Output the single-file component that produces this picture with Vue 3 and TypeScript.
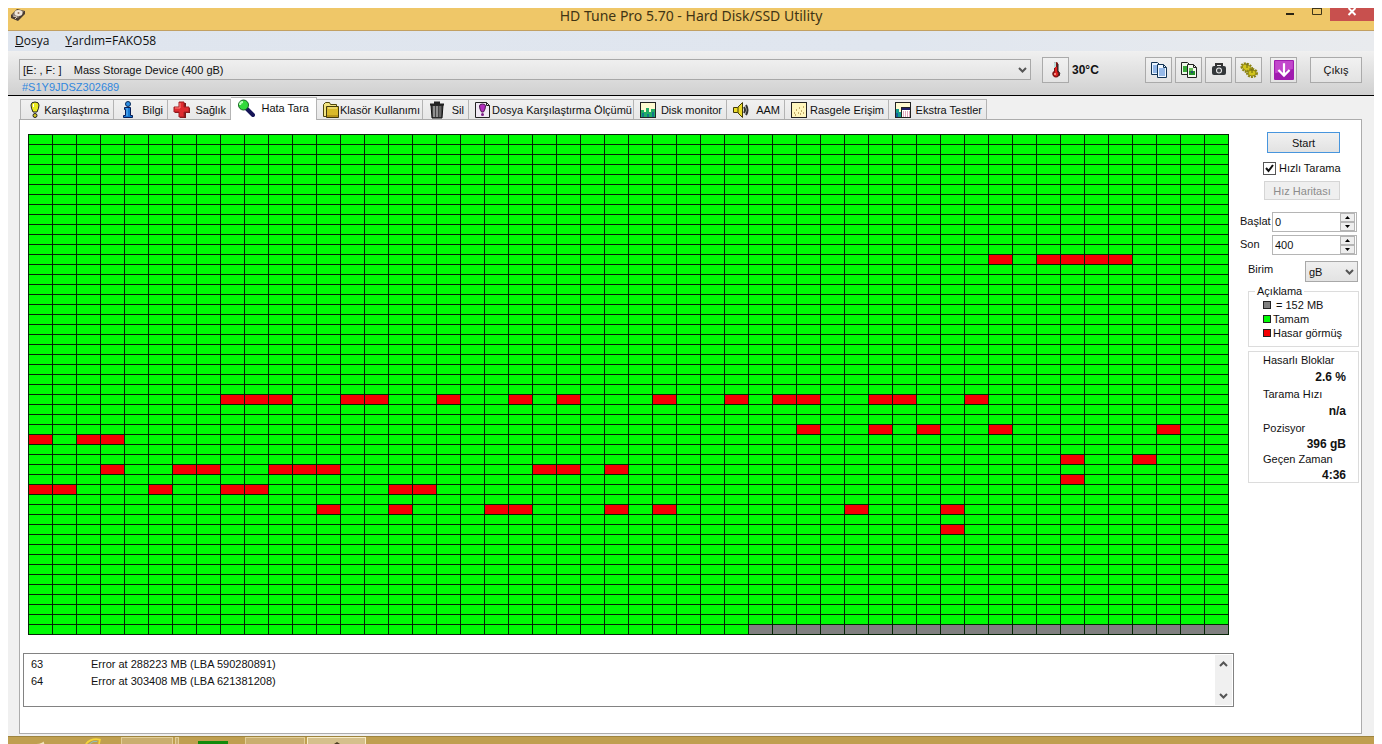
<script setup lang="ts">
import { ref } from 'vue'

type BlockState = 'ok' | 'bad' | 'unread'

const COLUMNS = 50
const ROWS = 50

const damaged: Record<number, number[]> = {
  12: [40, 42, 43, 44, 45],
  26: [8, 9, 10, 13, 14, 17, 20, 22, 26, 29, 31, 32, 35, 36, 39],
  29: [32, 35, 37, 40, 47],
  30: [0, 2, 3],
  32: [43, 46],
  33: [3, 6, 7, 10, 11, 12, 21, 22, 24],
  34: [43],
  35: [0, 1, 5, 8, 9, 15, 16],
  37: [12, 15, 19, 20, 24, 26, 34, 38],
  39: [38],
}
const scanned = 49 * COLUMNS + 30

const blocks: BlockState[] = Array.from({ length: ROWS * COLUMNS }, (_, i) => {
  if (i >= scanned) return 'unread'
  return damaged[Math.floor(i / COLUMNS)]?.includes(i % COLUMNS) ? 'bad' : 'ok'
})

const tabs = [
  { id: 'benchmark', label: 'Karşılaştırma' },
  { id: 'info', label: 'Bilgi' },
  { id: 'health', label: 'Sağlık' },
  { id: 'scan', label: 'Hata Tara' },
  { id: 'folder', label: 'Klasör Kullanımı' },
  { id: 'erase', label: 'Sil' },
  { id: 'file', label: 'Dosya Karşılaştırma Ölçümü' },
  { id: 'monitor', label: 'Disk monitor' },
  { id: 'aam', label: 'AAM' },
  { id: 'random', label: 'Rasgele Erişim' },
  { id: 'extra', label: 'Ekstra Testler' },
]
const activeTab = ref('scan')

const quickScan = ref(true)
const start = ref('0')
const end = ref('400')
const unit = ref('gB')

const stats = [
  { label: 'Hasarlı Bloklar', value: '2.6 %', tight: false },
  { label: 'Tarama Hızı', value: 'n/a', tight: false },
  { label: 'Pozisyor', value: '396 gB', tight: true },
  { label: 'Geçen Zaman', value: '4:36', tight: true },
]

const log = [
  { no: 63, text: 'Error at 288223 MB (LBA 590280891)' },
  { no: 64, text: 'Error at 303408 MB (LBA 621381208)' },
]
</script>

<template>
  <div class="screen">
    <div class="window">
      <header class="titlebar">
        <svg class="app-icon" viewBox="0 0 16 14" aria-hidden="true">
          <path d="M1 7 7 1l8 2v3l-7 7-7-3z" fill="#4b3c31" />
          <path d="M2 7 7 2l7 1-6 7z" fill="#8d8078" />
          <ellipse cx="8.500" cy="5" rx="4" ry="3" fill="#efe6da" />
          <circle cx="8.500" cy="5" r="1" fill="#96715b" />
          <path d="M3 8l4 1-2 2" stroke="#d8cabb" fill="none" />
        </svg>
        <h1>HD Tune Pro 5.70 - Hard Disk/SSD Utility</h1>
        <div class="window-buttons">
          <button type="button" aria-label="Minimize">
            <svg viewBox="0 0 10 8"><path d="M1 6h8" stroke="#2b2413" stroke-width="2" /></svg>
          </button>
          <button type="button" aria-label="Maximize">
            <svg viewBox="0 0 10 8"><path d="M.5 0v6.500h9V0M0 .5h10" stroke="#3f3519" fill="none" /></svg>
          </button>
          <button type="button" class="close" aria-label="Close">
            <svg viewBox="0 0 10 8"><path d="M1.500 0l7 7M8.500 0l-7 7" stroke="#fff" stroke-width="2" /></svg>
          </button>
        </div>
      </header>

      <nav class="menubar">
        <button type="button"><u>D</u>osya</button>
        <button type="button"><u>Y</u>ardım=FAKO58</button>
      </nav>

      <section class="toolbar">
        <div class="drive">
          <div class="select-box">
            <select aria-label="Drive">
              <option>[E: , F: ]&nbsp;&nbsp;&nbsp; Mass Storage Device (400 gB)</option>
            </select>
            <svg class="chevron" viewBox="0 0 9 6" aria-hidden="true"><path d="M1 1l3.500 3.500L8 1" /></svg>
          </div>
          <span class="serial">#S1Y9JDSZ302689</span>
        </div>
        <div class="temperature">
          <button type="button" class="tool" aria-label="Temperature">
            <svg viewBox="0 0 18 18">
              <path d="M7 2q2-2 4 0v8q3 2 1 5-3 3-6 0-2-3 1-5z" fill="#7c1515" />
              <path d="M7 2q1-1 2-1v6H7z" fill="#b8dcd8" />
              <path d="M8 6h2v5q2 2 0 4-3 1-3-2l1-2z" fill="#e02020" />
              <path d="M11 3v7q3 2 1 5" stroke="#222" fill="none" />
              <circle cx="8" cy="13" r="1" fill="#ffb0a0" />
            </svg>
          </button>
          <strong>30°C</strong>
        </div>
        <div class="tools">
          <button type="button" class="tool" aria-label="Copy text">
            <svg viewBox="0 0 18 18">
              <path d="M1.500 1.500h6l2 2v10h-8z" fill="#e9f4ff" stroke="#123456" />
              <path d="M3 5h5M3 7h5M3 9h5M3 11h5" stroke="#3c7bd0" />
              <path d="M7.500 3.500h6l3 3v10h-9z" fill="#f1f8ff" stroke="#123456" />
              <path d="M13.500 3.500v3h3" fill="none" stroke="#123456" />
              <path d="M9 8h6M9 10h6M9 12h6M9 14h6" stroke="#3c7bd0" />
            </svg>
          </button>
          <button type="button" class="tool" aria-label="Copy image">
            <svg viewBox="0 0 18 18">
              <path d="M1.500 1.500h6l2 2v10h-8z" fill="#eef8e8" stroke="#222" />
              <path d="M3 5h4v6H3z" fill="#38a838" />
              <path d="M7.500 3.500h6l3 3v10h-9z" fill="#f4faee" stroke="#222" />
              <path d="M13.500 3.500v3h3" fill="none" stroke="#222" />
              <path d="M9 7h4v3H9z" fill="#65bb58" /><path d="M9 10h6v4H9z" fill="#229329" />
              <circle cx="12" cy="11" r="1" fill="#263b86" />
            </svg>
          </button>
          <button type="button" class="tool" aria-label="Save screenshot">
            <svg viewBox="0 0 18 18">
              <path d="M6 5V3h6v2" fill="none" stroke="#333" stroke-width="2" />
              <rect x="2" y="5" width="14" height="9" rx="2" fill="#34383b" />
              <circle cx="9" cy="9.500" r="3" fill="#eee" /><circle cx="9" cy="9.500" r="2" fill="#45494c" />
            </svg>
          </button>
          <button type="button" class="tool" aria-label="Options">
            <svg viewBox="0 0 18 18">
              <ellipse cx="7" cy="7" rx="6" ry="4" fill="none" stroke="#8d8412" stroke-width="2" stroke-dasharray="2 1" transform="rotate(30 7 7)" />
              <ellipse cx="7" cy="7" rx="5" ry="3" fill="#d2c51c" stroke="#8d8412" transform="rotate(30 7 7)" />
              <ellipse cx="12" cy="12" rx="5" ry="4" fill="none" stroke="#8d8412" stroke-width="2" stroke-dasharray="2 1" />
              <ellipse cx="12" cy="12" rx="4" ry="3" fill="#d2c51c" stroke="#8d8412" />
              <path d="M7 2v5M12 8v4" stroke="#6b650b" />
            </svg>
          </button>
          <button type="button" class="tool download" aria-label="Minimize to tray">
            <svg viewBox="0 0 18 18">
              <rect width="18" height="18" rx="1" fill="#a01caf" /><path d="M1 1h16v7L1 12z" fill="#c247cc" />
              <path d="M9 3v11M4 9l5 5 5-5" fill="none" stroke="#fff" stroke-width="2" />
            </svg>
          </button>
          <button type="button" class="exit">Çıkış</button>
        </div>
      </section>

      <main class="content">
        <div class="tabs" role="tablist">
          <button
            v-for="tab in tabs"
            :key="tab.id"
            type="button"
            role="tab"
            class="tab"
            :class="{ active: tab.id === activeTab }"
            :aria-selected="tab.id === activeTab"
            @click="activeTab = tab.id"
          >
            <svg viewBox="0 0 18 18" aria-hidden="true">
              <g v-if="tab.id === 'benchmark'" stroke="#222">
                <path d="M5 4q0-3 4-3t4 3q0 3-2 7H7Q5 7 5 4z" fill="#eaea20" />
                <circle cx="9" cy="14.500" r="2" fill="#d4c920" />
                <path d="M7.500 3v3" stroke="#fff" />
              </g>
              <g v-else-if="tab.id === 'info'">
                <circle cx="9" cy="3" r="2.500" fill="#2d8fe5" stroke="#082957" />
                <path d="M5.500 6.500h6v8h2v2h-9v-2h2v-6h-1z" fill="#1677d2" stroke="#071e58" />
                <path d="M8 7v8" stroke="#6ac1ff" />
              </g>
              <g v-else-if="tab.id === 'health'">
                <path d="M7 2h6v5h4v5h-4v5H7v-5H2V7h5z" fill="#771818" />
                <path d="M6 1h5v5h5v5h-5v5H6v-5H1V6h5z" fill="#df2c30" stroke="#a01e22" />
                <path d="M7 2v5H2" stroke="#ff8580" fill="none" />
              </g>
              <g v-else-if="tab.id === 'scan'">
                <path d="M10 10l6 6" stroke="#151457" stroke-width="4" stroke-linecap="round" />
                <circle cx="6.500" cy="6" r="5" fill="#33da3b" stroke="#176223" />
                <path d="M3 6q0-3 3-3" stroke="#b9ffb9" stroke-width="2" fill="none" />
              </g>
              <g v-else-if="tab.id === 'folder'">
                <path d="M1.500 15.500v-12l2-2h4l1 2h6v12z" fill="#f1e482" stroke="#4f450c" />
                <path d="M4.500 5.500h12v11h-12z" fill="#d9b92b" stroke="#42390c" />
                <path d="M6 7h9" stroke="#fff4a4" /><path d="M5 15h11" stroke="#96720e" />
              </g>
              <g v-else-if="tab.id === 'erase'">
                <path d="M3 4h12l-1 13H4z" fill="#444" stroke="#111" />
                <path d="M6 5v11M9 5v11" stroke="#ddd" /><path d="M12 5v11" stroke="#888" />
                <path d="M2 3.500h14M6 1.500h6" stroke="#222" stroke-width="2" />
              </g>
              <g v-else-if="tab.id === 'file'">
                <path d="M1.500 1.500h11l3 3v12h-14z" fill="#f0e9f4" stroke="#222" />
                <path d="M12.500 1.500v3h3" fill="none" stroke="#222" />
                <path d="M5.500 5q0-2 3-2t3 2q0 3-2 6h-2q-2-3-2-6z" fill="#b32dc0" stroke="#4b1550" />
                <circle cx="8.500" cy="13.500" r="1.500" fill="#7b1c85" />
              </g>
              <g v-else-if="tab.id === 'monitor'">
                <rect x="1.500" y="1.500" width="15" height="15" fill="#fffbd1" stroke="#222" />
                <path d="M2 16V9h3v2h2V7h3v4h2V8h4v8z" fill="#22ad65" />
                <path d="M4 16v-4M9 16v-3M14 16v-5" stroke="#10778a" stroke-width="2" />
              </g>
              <g v-else-if="tab.id === 'aam'">
                <path d="M1.500 6.500h4l5-5v15l-5-5h-4z" fill="#eddc2b" stroke="#423b08" />
                <path d="M6 6v6" stroke="#423b08" />
                <path d="M12 6q2 3 0 6M14 4q3 5 0 10" fill="none" stroke="#333" stroke-width="2" />
              </g>
              <g v-else-if="tab.id === 'random'">
                <rect x="1.500" y="1.500" width="15" height="15" fill="#fff6bd" stroke="#222" />
                <path d="M4 12h1M6 9h1M8 12h1M9 7h1M11 10h1M13 6h1M13 12h1M5 14h1M10 13h1" stroke="#8b671c" />
              </g>
              <g v-else>
                <rect x="1.500" y="1.500" width="15" height="15" fill="#fffbd1" stroke="#222" />
                <path d="M2 16V8h3v3h3v5z" fill="#159b8d" /><path d="M2 16v-4h2v4z" fill="#145e9d" />
                <rect x="7.500" y="6.500" width="9" height="10" fill="#fff" stroke="#222" />
                <path d="M8 8h8" stroke="#202067" stroke-width="2" />
                <path d="M9 11h7M9 13h7M9 15h7" stroke="#c25082" stroke-dasharray="1 1" />
              </g>
            </svg>
            <span>{{ tab.label }}</span>
          </button>
        </div>

        <section class="panel">
          <div class="scan">
            <div class="map" role="img" aria-label="Hata Tara">
              <i v-for="(state, i) in blocks" :key="i" :class="state"></i>
            </div>
            <div class="log">
              <table>
                <tbody>
                  <tr v-for="entry in log" :key="entry.no">
                    <td class="number">{{ entry.no }}</td>
                    <td>{{ entry.text }}</td>
                  </tr>
                </tbody>
              </table>
              <div class="scrollbar">
                <button type="button" aria-label="Scroll up">
                  <svg class="arrow" viewBox="0 0 9 6"><path d="M1 5l3.500-3.500L8 5" /></svg>
                </button>
                <button type="button" aria-label="Scroll down">
                  <svg class="arrow" viewBox="0 0 9 6"><path d="M1 1l3.500 3.500L8 1" /></svg>
                </button>
              </div>
            </div>
          </div>

          <aside class="side">
            <button type="button" class="start">Start</button>
            <div class="quick">
              <span class="tick">
                <input id="quick" v-model="quickScan" type="checkbox" />
                <svg v-if="quickScan" viewBox="0 0 13 13" aria-hidden="true"><path d="M3 6l2.500 3L10 3" /></svg>
              </span>
              <label for="quick">Hızlı Tarama</label>
            </div>
            <button type="button" class="speedmap" disabled>Hız Haritası</button>

            <div class="field">
              <label for="start">Başlat</label>
              <div class="spin">
                <input id="start" v-model="start" type="text" />
                <div class="steps">
                  <button type="button" aria-label="Increase start"><svg viewBox="0 0 5 3"><path d="M0 3h5L2.500 0z" /></svg></button>
                  <button type="button" aria-label="Decrease start"><svg viewBox="0 0 5 3"><path d="M0 0h5L2.500 3z" /></svg></button>
                </div>
              </div>
            </div>
            <div class="field">
              <label for="end">Son</label>
              <div class="spin">
                <input id="end" v-model="end" type="text" />
                <div class="steps">
                  <button type="button" aria-label="Increase end"><svg viewBox="0 0 5 3"><path d="M0 3h5L2.500 0z" /></svg></button>
                  <button type="button" aria-label="Decrease end"><svg viewBox="0 0 5 3"><path d="M0 0h5L2.500 3z" /></svg></button>
                </div>
              </div>
            </div>
            <div class="unit">
              <label for="unit">Birim</label>
              <div class="select-box">
                <select id="unit" v-model="unit">
                  <option>gB</option>
                </select>
                <svg class="chevron" viewBox="0 0 9 6" aria-hidden="true"><path d="M1 1l3.500 3.500L8 1" /></svg>
              </div>
            </div>

            <fieldset class="legend">
              <legend>Açıklama</legend>
              <ul>
                <li class="size"><i class="unread"></i>= 152 MB</li>
                <li><i class="ok"></i>Tamam</li>
                <li><i class="bad"></i>Hasar görmüş</li>
              </ul>
            </fieldset>

            <dl class="stats">
              <template v-for="item in stats" :key="item.label">
                <dt>{{ item.label }}</dt>
                <dd :class="{ tight: item.tight }">{{ item.value }}</dd>
              </template>
            </dl>
          </aside>
        </section>
      </main>

      <footer class="taskbar">
        <svg class="launcher" viewBox="0 0 24 8"><path d="M8 8q7-1 8-3l1 3" fill="#f3e7be" /></svg>
        <svg class="launcher browser" viewBox="0 0 24 8"><path d="M5 8q6-7 16-5l-1 5" fill="none" stroke="#f5d63c" stroke-width="2" /><path d="M9 8q4-4 9-3" fill="none" stroke="#8bc6c9" /></svg>
        <span class="task"></span>
        <span class="task edge"></span>
        <span class="green"></span>
        <span class="task wide"></span>
        <span class="task wide current"><svg viewBox="0 0 8 2"><path d="M1 2l3-2 3 2z" fill="#4b3c21" /></svg></span>
      </footer>
    </div>
  </div>
</template>

<style>
html,
body {
  background: #fff;
}
</style>

<style scoped>
* {
  box-sizing: border-box;
}
.screen {
  min-height: 100vh;
  padding: 8px 8px 0;
  display: flex;
  font: 11px/14px "Liberation Sans", Arial, sans-serif;
  color: #111;
}
button,
input,
select {
  font: inherit;
  color: inherit;
  margin: 0;
  padding: 0;
  border-radius: 0;
}
svg {
  display: block;
  flex: none;
}
.window {
  flex: 1;
  min-width: 0;
  display: flex;
  flex-direction: column;
  background: #f0f0f0;
}
.titlebar {
  height: 23px;
  display: grid;
  grid-template-columns: 1fr auto 1fr;
  align-items: start;
  background: #efc768;
  border-bottom: 1px solid #c2a062;
}
.app-icon {
  width: 16px;
  height: 14px;
  margin-left: 2px;
}
h1 {
  margin: 0;
  font: 14px/16px "Noto Sans", "Open Sans", sans-serif;
  color: #3f3414;
  white-space: nowrap;
}
.window-buttons {
  display: flex;
  justify-content: flex-end;
}
.window-buttons button {
  width: 27px;
  height: 13px;
  border: 0;
  background: none;
  display: flex;
  justify-content: center;
}
.window-buttons .close {
  width: 44px;
  background: #c8504e;
}
.window-buttons svg {
  width: 10px;
  height: 8px;
}
.menubar {
  height: 20px;
  padding-left: 7px;
  display: flex;
  gap: 16px;
  background: linear-gradient(90deg, #dfe5ee, #e0e6ef 65%, #e9ebee);
}
.menubar button {
  border: 0;
  background: none;
  font: 12px/20px "Open Sans", "Noto Sans", sans-serif;
}
.toolbar {
  height: 45px;
  padding: 6px 12px 0 11px;
  display: flex;
  background: linear-gradient(#f0f0f0, #d0d0d0);
  border-bottom: 1px solid #000;
}
.drive {
  flex: 1;
  min-width: 0;
  padding-top: 2px;
}
.select-box {
  display: grid;
  align-items: center;
}
.select-box select {
  grid-area: 1 / 1;
  width: 100%;
  height: 21px;
  padding: 0 20px 0 3px;
  appearance: none;
  border: 1px solid #a8a8a8;
  background: linear-gradient(#efefef, #e3e3e3);
}
.chevron {
  grid-area: 1 / 1;
  justify-self: end;
  width: 9px;
  height: 6px;
  margin-right: 4px;
  pointer-events: none;
}
.chevron path,
.arrow path {
  fill: none;
  stroke: #555;
  stroke-width: 2;
}
.serial {
  display: block;
  padding-left: 3px;
  color: #3187de;
}
.temperature {
  width: 103px;
  margin-left: 11px;
  display: flex;
  gap: 3px;
}
.temperature strong {
  font-size: 12px;
  line-height: 26px;
}
.tools {
  display: flex;
  gap: 3px;
}
.tool,
.exit {
  width: 27px;
  height: 26px;
  display: grid;
  place-items: center;
  border: 1px solid #aaa;
  background: linear-gradient(#f1f1f1, #e3e3e3);
}
.tool svg {
  width: 18px;
  height: 18px;
}
.download {
  margin-left: 5px;
}
.download svg {
  width: 20px;
  height: 20px;
}
.exit {
  width: 52px;
  margin-left: 10px;
}
.content {
  flex: 1;
  display: flex;
  flex-direction: column;
  padding: 0 12px 2px 11px;
}
.tabs {
  height: 23px;
  padding-left: 1px;
  display: grid;
  grid-template-columns: 94px 54px 63px 86px 106px 46px 165px 93px 58px 104px 98px;
  align-items: end;
}
.tab {
  height: 20px;
  padding: 0 4px 0 5px;
  display: flex;
  align-items: center;
  justify-content: space-between;
  border: 1px solid #b4b4b4;
  border-width: 1px 1px 0 0;
  background: linear-gradient(#f1f1f1, #e7e7e7);
  white-space: nowrap;
}
.tab:first-child {
  border-left-width: 1px;
}
.tab.active {
  height: 23px;
  margin-bottom: -1px;
  padding: 0 7px 3px 6px;
  background: #fff;
  position: relative;
}
.tab svg {
  width: 18px;
  height: 18px;
}
.panel {
  flex: 1;
  display: flex;
  gap: 6px;
  padding: 12px 2px 20px 3px;
  border: 1px solid #acacac;
  background: #fff;
}
.scan {
  flex: 1;
  min-width: 0;
  padding-top: 2px;
}
.map {
  margin: 0 5px 18px;
  padding: 1px;
  display: grid;
  grid-template-columns: repeat(50, minmax(0, 1fr));
  grid-auto-rows: 9px;
  gap: 1px;
  background: #062506;
}
.ok {
  background: #00fb04;
}
.bad {
  background: #f50004;
}
.unread {
  background: #808080;
}
.log {
  height: 54px;
  display: flex;
  justify-content: space-between;
  border: 1px solid #828282;
  background: #fff;
}
.log table {
  align-self: flex-start;
  margin: 1px 0 0 7px;
  border-collapse: collapse;
}
.log td {
  height: 17px;
  padding: 0;
}
.log .number {
  width: 60px;
}
.scrollbar {
  width: 17px;
  margin: 1px;
  display: flex;
  flex-direction: column;
  justify-content: space-between;
  background: #f0f0f0;
}
.scrollbar button {
  height: 18px;
  border: 0;
  background: none;
  display: grid;
  place-items: center;
}
.arrow {
  width: 9px;
  height: 6px;
}
.side {
  width: 119px;
  display: flex;
  flex-direction: column;
}
.start {
  width: 73px;
  height: 21px;
  margin-left: 27px;
  border: 1px solid #4795dd;
  background: linear-gradient(#f1f1f1, #e2e2e2);
}
.quick {
  height: 14px;
  margin: 8px 0 6px 23px;
  display: flex;
  align-items: center;
  gap: 3px;
  white-space: nowrap;
}
.tick {
  display: grid;
}
.tick input {
  grid-area: 1 / 1;
  width: 13px;
  height: 13px;
  appearance: none;
  border: 1px solid #555;
  background: #fff;
}
.tick svg {
  grid-area: 1 / 1;
  width: 13px;
  height: 13px;
  pointer-events: none;
}
.tick path {
  fill: none;
  stroke: #111;
  stroke-width: 2;
}
.speedmap {
  width: 76px;
  height: 19px;
  margin: 0 0 12px 24px;
  border: 1px solid #d5d5d5;
  background: #efefef;
  color: #8c8c8c;
}
.field {
  margin-bottom: 3px;
  display: flex;
  justify-content: space-between;
  padding-right: 2px;
}
.field label {
  line-height: 18px;
}
.spin {
  width: 85px;
  height: 20px;
  display: flex;
  border: 1px solid #b5b5b5;
  background: #fff;
}
.spin input {
  flex: 1;
  min-width: 0;
  padding-left: 2px;
  border: 0;
  background: none;
}
.steps {
  width: 15px;
  margin: 0 1px;
  display: grid;
  grid-template-rows: 1fr 1fr;
}
.steps button {
  border: 1px solid #b5b5b5;
  background: #eee;
  display: grid;
  place-items: center;
}
.steps svg {
  width: 5px;
  height: 3px;
}
.unit {
  margin: 3px 1px 2px 8px;
  display: flex;
  justify-content: space-between;
}
.unit label {
  line-height: 16px;
}
.unit .select-box {
  width: 53px;
}
.legend {
  height: 63px;
  margin: 0 0 4px 8px;
  padding: 0 0 0 14px;
  border: 1px solid #dcdcdc;
}
.legend legend {
  margin-left: -8px;
  padding: 0 2px;
}
.legend ul {
  margin: 0;
  padding: 0;
  list-style: none;
}
.legend li {
  height: 14px;
  display: flex;
  align-items: center;
  gap: 2px;
  white-space: nowrap;
}
.legend .size {
  gap: 5px;
}
.legend i {
  width: 8px;
  height: 8px;
  border: 1px solid #222;
}
.stats {
  height: 132px;
  margin: 0 0 0 8px;
  padding: 0 12px 0 14px;
  border: 1px solid #dcdcdc;
}
.stats dt {
  line-height: 17px;
}
.stats dd {
  margin: 0;
  text-align: right;
  font-size: 12px;
  font-weight: bold;
  line-height: 17px;
}
.stats .tight {
  line-height: 14px;
}
.taskbar {
  height: 8px;
  display: flex;
  align-items: flex-end;
  overflow: hidden;
  background: #bf9f50;
  border-top: 1px solid #9d843f;
}
.launcher {
  width: 24px;
  height: 7px;
  margin-left: 20px;
}
.browser {
  margin-left: 28px;
}
.task {
  width: 52px;
  height: 7px;
  margin-left: 17px;
  border: 1px solid #e3cf98;
  border-bottom: 0;
  background: #c9ae6f;
}
.task.edge {
  width: 4px;
  margin-left: 2px;
}
.green {
  width: 30px;
  height: 3px;
  margin-left: 19px;
  background: #128a0c;
}
.task.wide {
  width: 60px;
}
.task.current {
  width: 59px;
  margin-left: 2px;
  border-color: #f8edc8;
  background: #d5c08c;
  display: flex;
  align-items: flex-end;
  justify-content: center;
}
.current svg {
  width: 8px;
  height: 2px;
}
</style>
